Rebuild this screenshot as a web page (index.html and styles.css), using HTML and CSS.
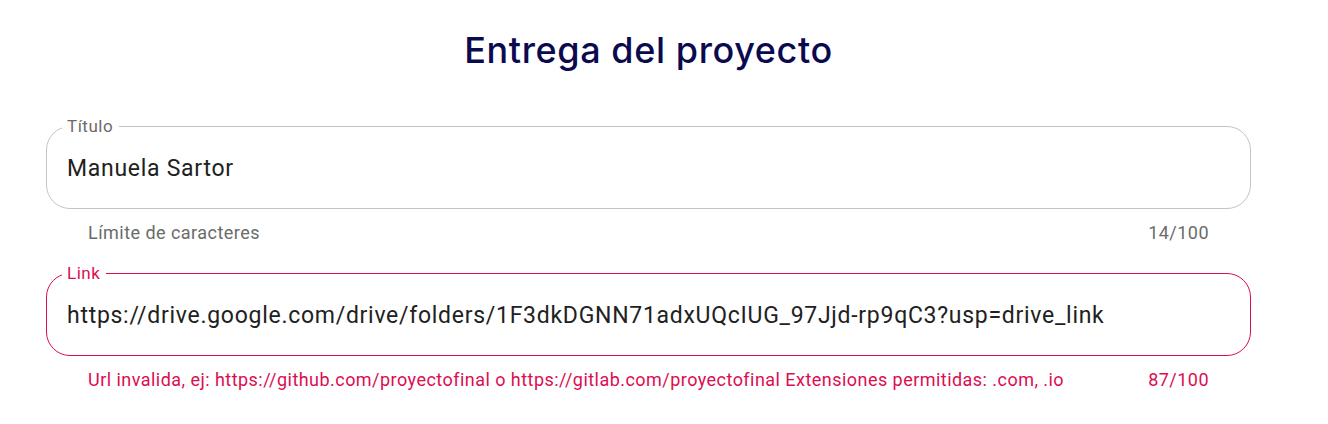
FILE: index.html
```html
<!DOCTYPE html>
<html lang="es">
<head>
<meta charset="utf-8">
<title>Entrega del proyecto</title>
<link rel="stylesheet" href="styles.css">
</head>
<body>
<main class="page">
  <h1 class="title">Entrega del proyecto</h1>
  <div class="form-control">
    <fieldset class="field">
      <legend class="label">Título</legend>
      <div class="value">Manuela Sartor</div>
    </fieldset>
    <div class="helper">
      <span>Límite de caracteres</span>
      <span>14/100</span>
    </div>
  </div>
  <div class="form-control error">
    <fieldset class="field">
      <legend class="label">Link</legend>
      <div class="value">https://drive.google.com/drive/folders/1F3dkDGNN71adxUQcIUG_97Jjd-rp9qC3?usp=drive_link</div>
    </fieldset>
    <div class="helper">
      <span>Url invalida, ej: https://github.com/proyectofinal o https://gitlab.com/proyectofinal Extensiones permitidas: .com, .io</span>
      <span>87/100</span>
    </div>
  </div>
</main>
</body>
</html>
```
FILE: styles.css
```css
html, body {
  margin: 0;
  padding: 0;
  background: #ffffff;
}
body {
  font-family: Roboto, "Liberation Sans", Arial, sans-serif;
}
.page {
  width: 1205px;
  margin-left: 46px;
  padding-top: 26px;
  display: flex;
  flex-direction: column;
}
.title {
  margin: 0 0 42px 0;
  text-align: center;
  font-family: Inter, "Open Sans", sans-serif;
  font-weight: 500;
  font-size: 36px;
  line-height: 48px;
  letter-spacing: 0.6px;
  color: #0b0a4f;
}
.form-control {
  display: flex;
  flex-direction: column;
  margin-bottom: 20px;
}
.field {
  margin: 0;
  padding: 0 20px 24px 20px;
  border: 1px solid #c4c4c4;
  border-radius: 24px;
  min-width: 0;
}
.label {
  margin-left: -5px;
  padding: 0 6px 0 5px;
  font-size: 17px;
  line-height: 20px;
  letter-spacing: 0.5px;
  color: #6b6b6b;
}
.value {
  margin-top: 18px;
  font-size: 23px;
  line-height: 30px;
  letter-spacing: 0.72px;
  color: #212121;
  white-space: nowrap;
}
.helper {
  display: flex;
  justify-content: space-between;
  margin: 13px 42px 0 42px;
  font-size: 18px;
  line-height: 21px;
  letter-spacing: 0.46px;
  color: #6b6b6b;
}
.error .field {
  border-color: #dc0d50;
}
.error .label,
.error .helper {
  color: #dc0d50;
}
```
